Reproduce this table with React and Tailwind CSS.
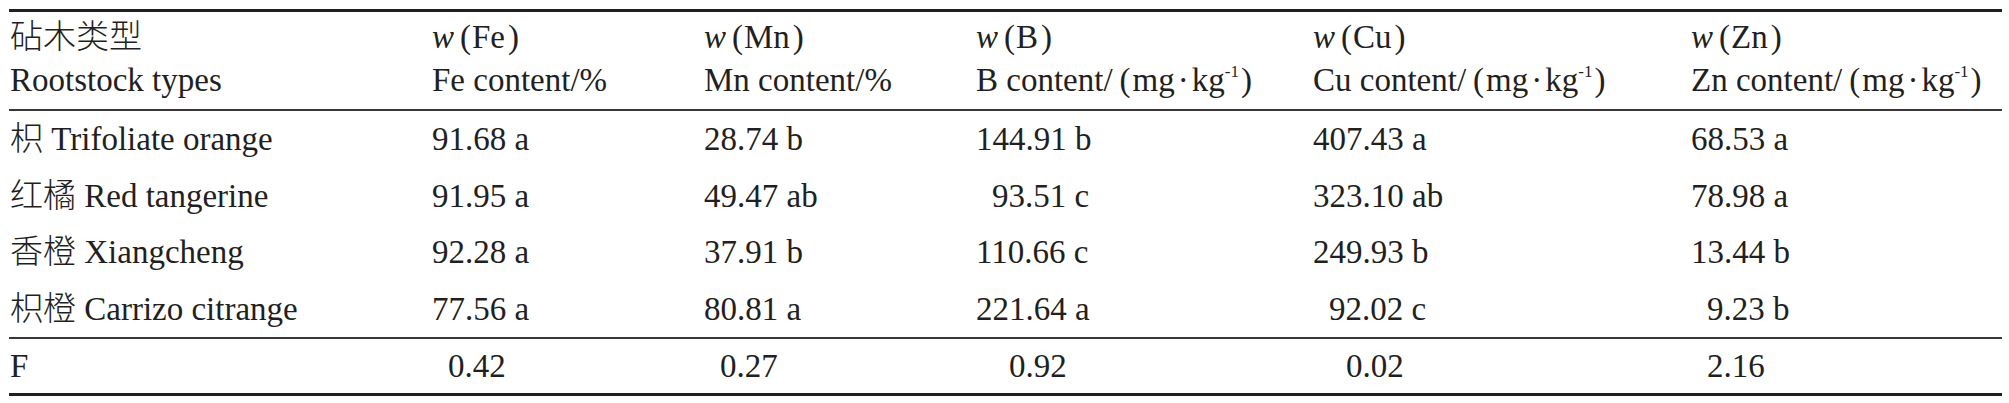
import React from "react";

const cols = "grid grid-cols-[423px_272px_272px_337px_378px_1fr]";

function Unit({ el }) {
  return (
    <span className="whitespace-nowrap">
      {el} content/<span className="ml-[7px] mr-[2px]">(</span>mg<span className="mx-[3px]">·</span>kg
      <sup className="text-[17px] top-[-0.85em]">-1</sup>
      <span className="ml-[2px]">)</span>
    </span>
  );
}

function Head({ el }) {
  return (
    <span className="whitespace-nowrap">
      <i>w</i>
      <span className="ml-[6px] mr-[1px]">(</span>
      {el}
      <span className="ml-[3px]">)</span>
    </span>
  );
}

const rows = [
  ["枳", "Trifoliate orange", ["91.68 a", 0], ["28.74 b", 0], ["144.91 b", 0], ["407.43 a", 0], ["68.53 a", 0]],
  ["红橘", "Red tangerine", ["91.95 a", 0], ["49.47 ab", 0], ["93.51 c", 1], ["323.10 ab", 0], ["78.98 a", 0]],
  ["香橙", "Xiangcheng", ["92.28 a", 0], ["37.91 b", 0], ["110.66 c", 0], ["249.93 b", 0], ["13.44 b", 0]],
  ["枳橙", "Carrizo citrange", ["77.56 a", 0], ["80.81 a", 0], ["221.64 a", 0], ["92.02 c", 1], ["9.23 b", 1]],
];

const indent = ["", "pl-[16px]", "pl-[33px]"];

export default function App() {
  return (
    <div className="w-[2009px] h-[403px] bg-white pt-[9px] px-[9px] text-[#231f20] font-['Liberation_Serif','Noto_Sans_CJK_SC',serif] text-[33px]">
      <div className="w-[1993px] border-t-[3px] border-b-[3px] border-[#231f20]">
        <div className={`${cols} pt-[4px] pb-[7px] leading-[43px] border-b-2 border-[#3b3738]`}>
          <div className="flex flex-col pl-[1px]">
            <span className="font-light">砧木类型</span>
            <span>Rootstock types</span>
          </div>
          <div className="flex flex-col">
            <Head el="Fe" />
            <span>Fe content/%</span>
          </div>
          <div className="flex flex-col">
            <Head el="Mn" />
            <span>Mn content/%</span>
          </div>
          <div className="flex flex-col">
            <Head el="B" />
            <Unit el="B" />
          </div>
          <div className="flex flex-col">
            <Head el="Cu" />
            <Unit el="Cu" />
          </div>
          <div className="flex flex-col">
            <Head el="Zn" />
            <Unit el="Zn" />
          </div>
        </div>
        <div className="border-b-2 border-[#3b3738]">
          {rows.map((r) => (
            <div key={r[0]} className={`${cols} leading-[56.5px]`}>
              <div className="pl-[1px] whitespace-nowrap">
                <span className="font-light">{r[0]}</span> {r[1]}
              </div>
              {r.slice(2).map(([v, ind], i) => (
                <div key={i} className={`whitespace-nowrap ${indent[ind]}`}>
                  {v}
                </div>
              ))}
            </div>
          ))}
        </div>
        <div className={`${cols} leading-[54px]`}>
          <div className="pl-[1px]">F</div>
          <div className="pl-[16px]">0.42</div>
          <div className="pl-[16px]">0.27</div>
          <div className="pl-[33px]">0.92</div>
          <div className="pl-[33px]">0.02</div>
          <div className="pl-[16px]">2.16</div>
        </div>
      </div>
    </div>
  );
}
